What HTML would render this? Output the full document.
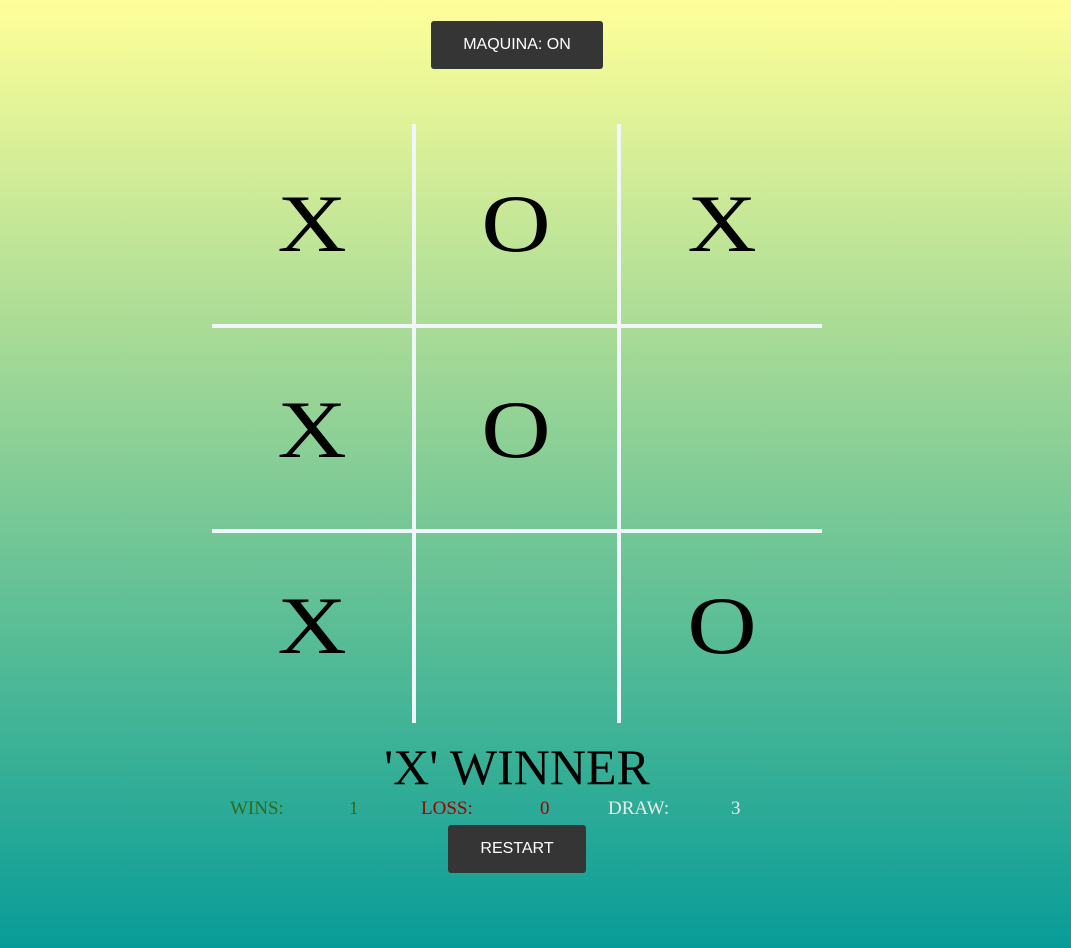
<!DOCTYPE html>
<html><head><meta charset="utf-8"><style>
html,body{margin:0;padding:0}
body{width:1071px;height:948px;position:relative;overflow:hidden;background:linear-gradient(to bottom,#ffff99 0%,#9cd696 40%,#4cb896 72%,#089c98 100%);font-family:"Liberation Serif",serif}
.btn{position:absolute;background:#353535;color:#fff;font-family:"Liberation Sans",sans-serif;font-size:16px;border-radius:3px;display:flex;align-items:center;justify-content:center}
.v,.h{position:absolute;background:#f0f6fc}
.v{width:4px;top:124px;height:599px}
.h{height:4px;left:212px;width:610px}
.g{position:absolute;font-size:82px;line-height:84px;width:200px;text-align:center;color:#000;transform:scaleX(1.17)}
.s{position:absolute;font-size:19px;line-height:18px;top:800px}
</style></head><body>
<div class="btn" style="left:431px;top:21px;width:172px;height:48px">MAQUINA: ON</div>
<div class="v" style="left:412px"></div>
<div class="v" style="left:617px"></div>
<div class="h" style="top:324px"></div>
<div class="h" style="top:529px"></div>
<div class="g" style="left:212px;top:182px">X</div>
<div class="g" style="left:416px;top:182px">O</div>
<div class="g" style="left:622px;top:182px">X</div>
<div class="g" style="left:212px;top:388px">X</div>
<div class="g" style="left:416px;top:388px">O</div>
<div class="g" style="left:212px;top:584px">X</div>
<div class="g" style="left:622px;top:584px">O</div>
<div style="position:absolute;left:0;width:1034px;text-align:center;top:742px;font-size:50px;line-height:50px">'X' WINNER</div>
<div class="s" style="left:230px;color:#2f6a1f">WINS:</div>
<div class="s" style="left:349px;color:#2f6a1f">1</div>
<div class="s" style="left:421px;color:#a00000">LOSS:</div>
<div class="s" style="left:540px;color:#a00000">0</div>
<div class="s" style="left:608px;color:#eaeaea">DRAW:</div>
<div class="s" style="left:731px;color:#eaeaea">3</div>
<div class="btn" style="left:448px;top:825px;width:138px;height:48px">RESTART</div>
</body></html>
